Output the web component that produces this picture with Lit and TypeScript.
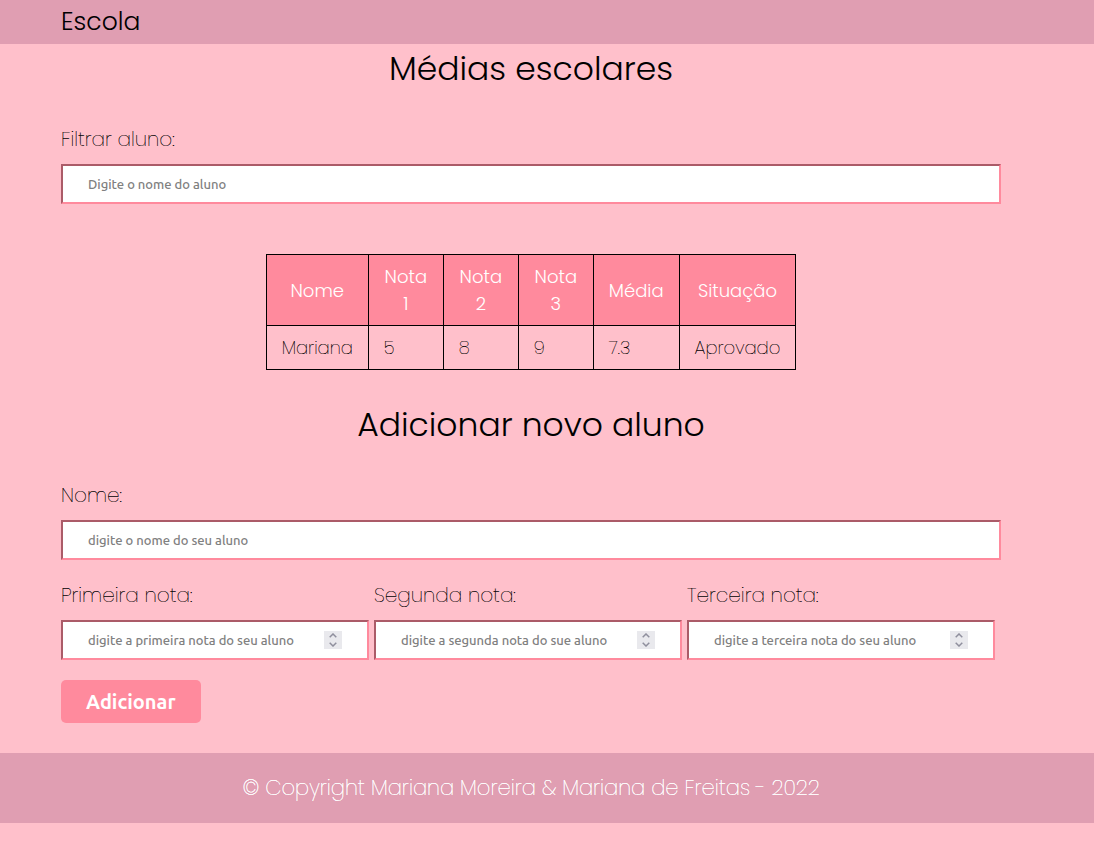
import { LitElement, html, css } from "lit";
import { customElement, property, state } from "lit/decorators.js";

interface Student {
  name: string;
  grades: number[];
}

@customElement("grade-field")
class GradeField extends LitElement {
  static styles = css`
    :host { display: block; min-width: 0; }
    .label { display: block; font-size: 20px; line-height: 30px; font-weight: 200; text-shadow: 0 0 0 currentColor; margin-bottom: 10px; }
    .box {
      display: flex;
      align-items: center;
      height: 40px;
      box-sizing: border-box;
      padding: 0 25px;
      background: #fff;
      border: 2px solid;
      border-color: #ab5b68 #ff8a9d #ff8a9d #ab5b68;
    }
    .input {
      flex: 1;
      min-width: 0;
      padding: 0;
      border: 0;
      outline: 0;
      background: none;
      font: 500 13px "Ubuntu", "Noto Sans", sans-serif;
      appearance: textfield;
    }
    .input::placeholder { color: #808080; opacity: 1; }
    .input::-webkit-inner-spin-button { display: none; }
    .stepper { display: flex; flex-direction: column; width: 18px; height: 18px; background: #e9e9ed; }
    .step { display: flex; justify-content: center; align-items: center; width: 18px; height: 9px; padding: 0; border: 0; background: none; }
    .chevron { width: 8px; height: 5px; fill: none; stroke: #8f8f9d; stroke-width: 1.5; }
  `;

  @property() label = "";
  @property() placeholder = "";

  get value() {
    return this.field.value;
  }

  private get field() {
    return this.renderRoot.querySelector("input") as HTMLInputElement;
  }

  render() {
    return html`
      <label class="label" for="grade">${this.label}</label>
      <div class="box">
        <input class="input" id="grade" type="number" placeholder=${this.placeholder} />
        <div class="stepper">
          <button class="step" type="button" aria-label="Aumentar" @click=${() => this.field.stepUp()}>
            <svg class="chevron" viewBox="0 0 8 5"><path d="M0.7 4.2 4 1l3.3 3.2" /></svg>
          </button>
          <button class="step" type="button" aria-label="Diminuir" @click=${() => this.field.stepDown()}>
            <svg class="chevron" viewBox="0 0 8 5"><path d="M0.7 0.8 4 4l3.3-3.2" /></svg>
          </button>
        </div>
      </div>
    `;
  }
}

@customElement("app-root")
class AppRoot extends LitElement {
  static styles = css`
    :host {
      display: block;
      min-height: 100vh;
      background: #ffc0cb;
      color: #000;
      font-family: "Poppins", "Inter", sans-serif;
      font-weight: 300;
    }
    .header, .footer { background: #e09eb2; padding: 0 93px 0 61px; }
    .brand { font-size: 25px; line-height: 36px; padding: 4px 0; }
    .main { padding: 0 93px 30px 61px; }
    .title { margin: 0; font-size: 33px; line-height: 50px; font-weight: 300; text-align: center; }
    .section { margin-top: 30px; }
    .label { display: block; font-size: 20px; line-height: 30px; font-weight: 200; text-shadow: 0 0 0 currentColor; margin-bottom: 10px; }
    .input {
      display: block;
      width: 100%;
      height: 40px;
      box-sizing: border-box;
      padding: 0 25px;
      background: #fff;
      border: 2px solid;
      border-color: #ab5b68 #ff8a9d #ff8a9d #ab5b68;
      border-radius: 0;
      outline: 0;
      font: 500 13px "Ubuntu", "Noto Sans", sans-serif;
    }
    .input::placeholder { color: #808080; opacity: 1; }
    .table { margin: 50px auto 30px; border-collapse: collapse; font-size: 18px; line-height: 27px; }
    .head, .cell { border: 1px solid #000; padding: 8px 15px; }
    .cell { text-align: left; font-weight: 200; text-shadow: 0 0 0 currentColor; }
    .head { background: #ff8a9d; color: #fff; text-align: center; font-weight: 300; }
    .short { width: 44px; }
    .grades { display: grid; grid-template-columns: repeat(3, 1fr); gap: 5px; margin: 20px 0; padding-right: 6px; }
    .submit {
      display: block;
      height: 43px;
      padding: 0 25px;
      border: 0;
      border-radius: 5px;
      background: #ff8a9d;
      color: #fff;
      font: bold 20px "Ubuntu", "Noto Sans", sans-serif;
    }
    .footer { color: #fff; font-size: 21px; line-height: 70px; font-weight: 200; text-shadow: 0 0 0 currentColor, 0 0 0 currentColor; text-align: center; }
    .copy { margin: 0; }
  `;

  @state() private students: Student[] = [{ name: "Mariana", grades: [5, 8, 9] }];
  @state() private filter = "";

  private add(event: Event) {
    event.preventDefault();
    const name = this.renderRoot.querySelector("#name") as HTMLInputElement;
    const fields = [...this.renderRoot.querySelectorAll("grade-field")] as GradeField[];
    this.students = [...this.students, { name: name.value, grades: fields.map((f) => Number(f.value)) }];
  }

  private row(student: Student) {
    const mean = student.grades.reduce((a, b) => a + b, 0) / student.grades.length;
    return html`<tr>
      <td class="cell">${student.name}</td>
      ${student.grades.map((g) => html`<td class="cell">${g}</td>`)}
      <td class="cell">${mean.toFixed(1)}</td>
      <td class="cell">${mean >= 6 ? "Aprovado" : "Reprovado"}</td>
    </tr>`;
  }

  render() {
    const shown = this.students.filter((s) => s.name.toLowerCase().includes(this.filter.toLowerCase()));
    return html`
      <header class="header"><div class="brand">Escola</div></header>
      <main class="main">
        <h1 class="title">Médias escolares</h1>
        <div class="section">
          <label class="label" for="filter">Filtrar aluno:</label>
          <input class="input" id="filter" type="text" placeholder="Digite o nome do aluno"
            @input=${(e: Event) => (this.filter = (e.target as HTMLInputElement).value)} />
        </div>
        <table class="table">
          <thead>
            <tr>
              <th class="head">Nome</th>
              ${[1, 2, 3].map((n) => html`<th class="head"><div class="short">Nota ${n}</div></th>`)}
              <th class="head">Média</th>
              <th class="head">Situação</th>
            </tr>
          </thead>
          <tbody>${shown.map((s) => this.row(s))}</tbody>
        </table>
        <h2 class="title">Adicionar novo aluno</h2>
        <form class="section" @submit=${this.add}>
          <label class="label" for="name">Nome:</label>
          <input class="input" id="name" type="text" placeholder="digite o nome do seu aluno" />
          <div class="grades">
            <grade-field label="Primeira nota:" placeholder="digite a primeira nota do seu aluno"></grade-field>
            <grade-field label="Segunda nota:" placeholder="digite a segunda nota do sue aluno"></grade-field>
            <grade-field label="Terceira nota:" placeholder="digite a terceira nota do seu aluno"></grade-field>
          </div>
          <button class="submit" type="submit">Adicionar</button>
        </form>
      </main>
      <footer class="footer"><p class="copy">© Copyright Mariana Moreira &amp; Mariana de Freitas - 2022</p></footer>
    `;
  }
}
